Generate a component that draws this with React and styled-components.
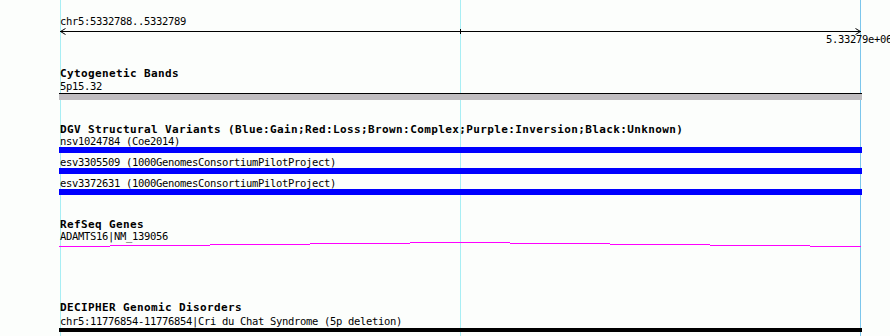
import React from 'react';
import styled, { createGlobalStyle } from 'styled-components';

const GlobalStyle = createGlobalStyle`
  html, body {
    margin: 0;
    background: #fcfefc;
    overflow: hidden;
  }
`;

const Panel = styled.div`
  width: 890px;
  height: 336px;
  overflow: hidden;
  box-sizing: border-box;
  padding: 15px 0 0 59px;
  font-family: "DejaVu Sans Mono", "Liberation Mono", monospace;
  color: #000;
  background-image: linear-gradient(#a8eef4, #a8eef4), linear-gradient(#a8eef4, #a8eef4),
    linear-gradient(#7cc6ec, #7cc6ec);
  background-size: 1px 100%;
  background-repeat: no-repeat;
  background-position: 60px 0, 460px 0, 860px 0;
`;

const Track = styled.section`
  width: 803px;
  margin-top: ${(p) => p.$top || 0}px;
  display: flex;
  flex-direction: column;
`;

const Title = styled.div`
  height: 13px;
  line-height: 13px;
  padding-left: 1px;
  font-size: 11px;
  font-weight: bold;
  letter-spacing: 0.38px;
  white-space: nowrap;
`;

const Label = styled.div`
  height: ${(p) => p.$h || 11}px;
  line-height: ${(p) => p.$h || 11}px;
  margin-top: ${(p) => p.$mt || 0}px;
  padding-left: ${(p) => p.$indent || 1}px;
  font-size: 10.5px;
  letter-spacing: -0.32px;
  white-space: nowrap;
`;

const Band = styled.div`
  height: 6px;
  border-top: 1px solid #000;
  background: #c0bdc0;
`;

const Feature = styled.div`
  display: flex;
  flex-direction: column;
  margin-top: ${(p) => (p.$first ? 0 : 4)}px;
`;

const Bar = styled.div`
  height: ${(p) => p.$h}px;
  margin-top: ${(p) => p.$mt || 0}px;
  background: ${(p) => p.$color};
`;

const Ruler = styled.svg`
  display: block;
  overflow: visible;
`;

const variants = [
  'nsv1024784 (Coe2014)',
  'esv3305509 (1000GenomesConsortiumPilotProject)',
  'esv3372631 (1000GenomesConsortiumPilotProject)',
];

// gene model drawn as stepped segments, [x0, x1, row] in track coords
const geneSteps = [
  [0, 51, 4], [51, 151, 3], [151, 251, 2], [251, 351, 1], [351, 451, 0],
  [451, 551, 1], [551, 651, 2], [651, 751, 3], [751, 802, 4],
];

export default function App() {
  return (
    <Panel>
      <GlobalStyle />
      <Track>
        <Label $h={13}>chr5:5332788..5332789</Label>
        <Ruler width="803" height="5">
          <g stroke="#000" strokeWidth="1" fill="none" shapeRendering="crispEdges">
            <line x1="1" y1="3.5" x2="802" y2="3.5" />
            <line x1="401.5" y1="1" x2="401.5" y2="6" />
          </g>
          <g stroke="#000" strokeWidth="1" fill="none">
            <path d="M6.5,0.5 L1.5,3.5 L6.5,6.5" />
            <path d="M796.5,0.5 L801.5,3.5 L796.5,6.5" />
          </g>
        </Ruler>
        <Label $h={13} $indent={767}>5.33279e+06</Label>
      </Track>

      <Track $top={21}>
        <Title>Cytogenetic Bands</Title>
        <Label $h={13}>5p15.32</Label>
        <Band />
      </Track>

      <Track $top={23}>
        <Title>DGV Structural Variants (Blue:Gain;Red:Loss;Brown:Complex;Purple:Inversion;Black:Unknown)</Title>
        {variants.map((v, i) => (
          <Feature key={v} $first={i === 0}>
            <Label>{v}</Label>
            <Bar $h={6} $color="#0000ff" />
          </Feature>
        ))}
      </Track>

      <Track $top={23}>
        <Title>RefSeq Genes</Title>
        <Label>ADAMTS16|NM_139056</Label>
        <svg width="803" height="5" style={{ display: 'block' }}>
          <path
            d={geneSteps.map(([a, b, r]) => `M${a},${r + 0.5} H${b}`).join(' ')}
            stroke="#ff00ff"
            strokeWidth="1"
            fill="none"
            shapeRendering="crispEdges"
          />
        </svg>
      </Track>

      <Track $top={54}>
        <Title>DECIPHER Genomic Disorders</Title>
        <Label $mt={2}>chr5:11776854-11776854|Cri du Chat Syndrome (5p deletion)</Label>
        <Bar $h={4} $mt={1} $color="#000" />
      </Track>
    </Panel>
  );
}
